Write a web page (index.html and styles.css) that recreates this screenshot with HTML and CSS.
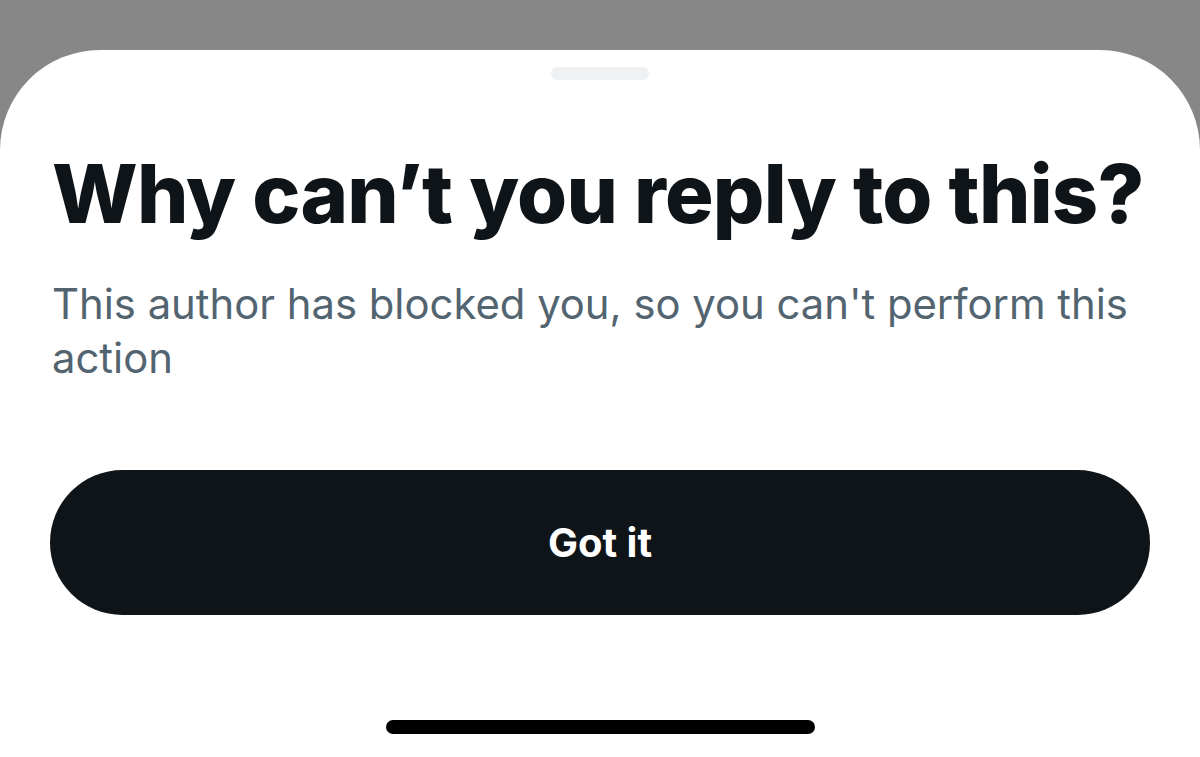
FILE: index.html
```html
<!DOCTYPE html>
<html lang="en">
<head>
    <meta charset="UTF-8">
    <meta name="viewport" content="width=device-width, initial-scale=1.0">
    <title>Why can’t you reply to this?</title>
    <link rel="stylesheet" href="styles.css">
</head>
<body>
    <div class="sheet">
        <div class="grabber"></div>
        <div class="content">
            <h1 class="title">Why can’t you reply to this?</h1>
            <p class="message">This author has blocked you, so you can't perform this action</p>
            <button class="got-it">Got it</button>
        </div>
        <div class="home-bar"></div>
    </div>
</body>
</html>
```

FILE: styles.css
```css
:root {
    --backdrop: #878787;
    --text-primary: #0f1419;
    --text-secondary: #536471;
    --grabber: #eff1f3;
}

* {
    margin: 0;
    padding: 0;
    box-sizing: border-box;
}

html, body {
    height: 100%;
}

body {
    font-family: Inter, 'Noto Sans', sans-serif;
    background-color: var(--backdrop);
    padding-top: 50px;
    overflow: hidden;
}

.sheet {
    background-color: #fff;
    border-radius: 100px 100px 0 0;
    height: 707px;
    display: flex;
    flex-direction: column;
    align-items: center;
}

.grabber {
    width: 98px;
    height: 13px;
    border-radius: 7px;
    background-color: var(--grabber);
    margin-top: 17px;
}

.content {
    width: 100%;
    padding: 0 50px;
    flex: 1;
}

.title {
    font-size: 81px;
    font-weight: 800;
    letter-spacing: -0.8px;
    color: var(--text-primary);
    line-height: 1;
    margin-top: 74px;
    padding-left: 2px;
}

.message {
    font-size: 41.8px;
    color: var(--text-secondary);
    line-height: 54px;
    margin-top: 42px;
    padding-left: 2px;
}

.got-it {
    display: block;
    width: 100%;
    height: 145px;
    margin-top: 85px;
    border: none;
    border-radius: 73px;
    background-color: var(--text-primary);
    color: #fff;
    font-family: inherit;
    font-size: 40px;
    font-weight: 700;
}

.home-bar {
    width: 429px;
    height: 14px;
    border-radius: 7px;
    background-color: #000;
    margin-bottom: 23px;
}
```
